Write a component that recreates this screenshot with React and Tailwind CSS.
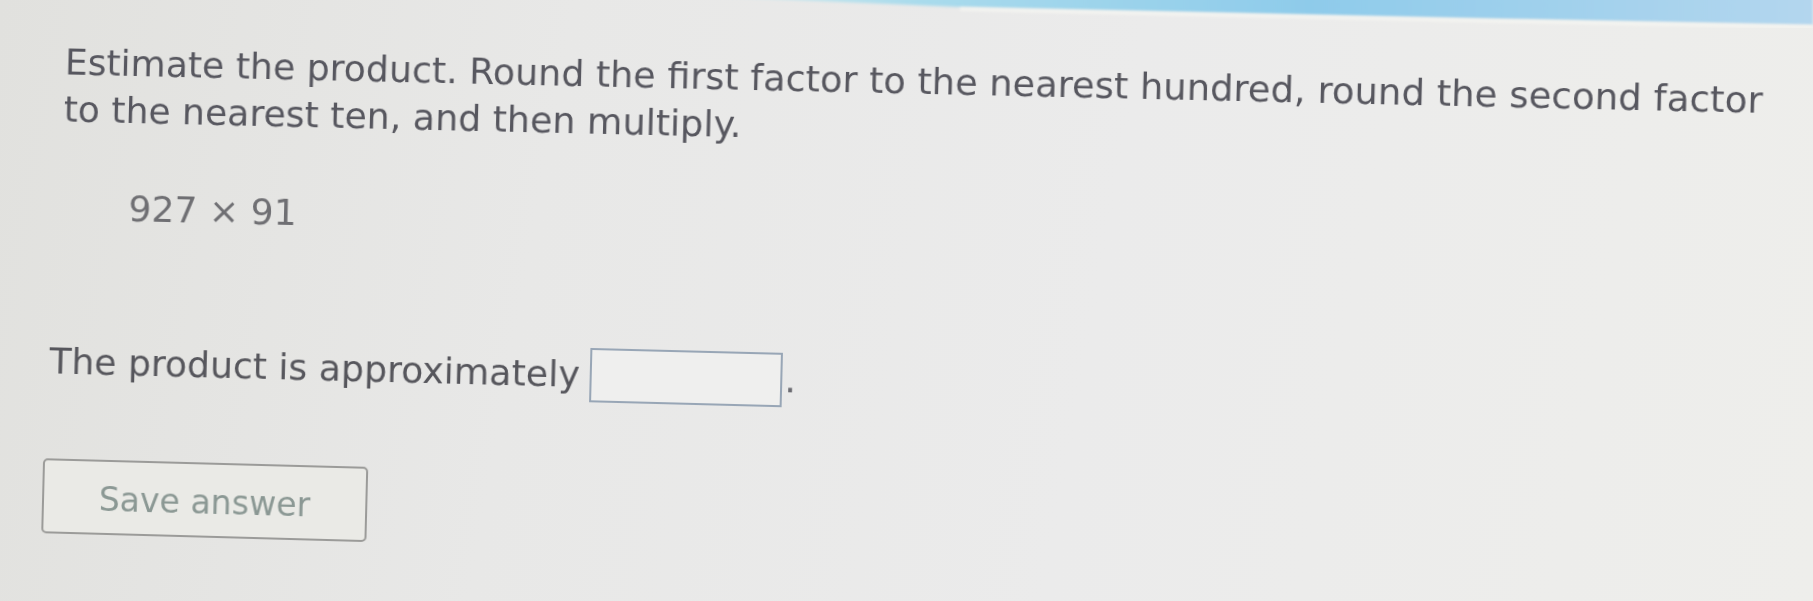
export default function App() {
  return (
    <div className="relative h-[601px] w-full overflow-hidden bg-[linear-gradient(100deg,#e1e1de_0%,#e8e8e7_30%,#ebebeb_60%,#eeeeeb_100%)] font-['DejaVu_Sans','Verdana',sans-serif]">
      {/* header strip of the page, seen at an angle */}
      <svg className="block h-[28px] w-full" viewBox="0 0 1813 28" preserveAspectRatio="none">
        <defs>
          <linearGradient id="band" x1="0" y1="0" x2="1" y2="0">
            <stop offset="0" stopColor="#d6ecee" />
            <stop offset="0.2" stopColor="#a9dbec" />
            <stop offset="0.55" stopColor="#8ecbea" />
            <stop offset="1" stopColor="#b3d6ee" />
          </linearGradient>
          <filter id="soft" x="-5%" y="-50%" width="110%" height="200%">
            <feGaussianBlur stdDeviation="1.6" />
          </filter>
        </defs>
        <polygon
          points="694,-4 1813,-4 1813,25 1500,19 1272,14 960,7"
          fill="url(#band)"
          filter="url(#soft)"
        />
        <polyline
          points="960,9 1272,16 1500,21 1813,27"
          fill="none"
          stroke="#f6f6f2"
          strokeWidth="3"
          filter="url(#soft)"
        />
      </svg>

      {/* question panel, tilted slightly as on the photographed screen */}
      <div className="origin-[0px_272px] transform-[perspective(2000px)_rotateY(-1.17deg)_rotate(1.43deg)] pl-[47px] pt-[9px] blur-[0.5px]">
        <p className="ml-[12px] max-w-[1690px] text-[36px] leading-[47px] text-[#57575f]">
          Estimate the product. Round the first factor to the nearest hundred, round the second factor to the nearest ten, and then multiply.
        </p>

        <div className="ml-[79px] mt-[51px] text-[36px] leading-[47px] text-[#6f6f73]">927 × 91</div>

        <div className="ml-[4px] mt-[104px] flex items-end text-[36px] leading-[47px] text-[#56565c]">
          <span>The product is approximately</span>
          <span className="mb-[-4px] ml-[10px] block h-[54px] w-[190px] border-2 border-[#98a6b6] bg-[#efefee]" />
          <span className="ml-[2px] text-[#6a6a70]">.</span>
        </div>

        <button
          type="button"
          className="mt-[74px] flex h-[75px] w-[324px] items-center justify-center rounded-[5px] border-2 border-[#9b9b99] bg-[#eaeae6] pt-[4px] text-[33px] leading-[40px] text-[#8b9894]"
        >
          Save answer
        </button>
      </div>
    </div>
  );
}
